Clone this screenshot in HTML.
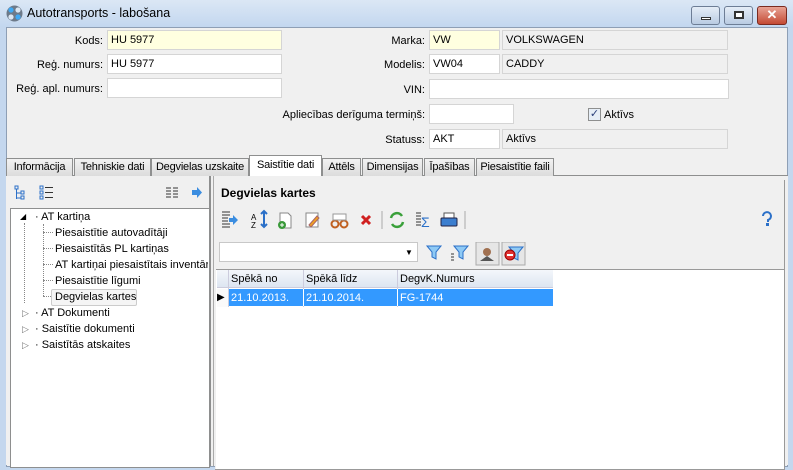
<!DOCTYPE html><html><head><meta charset="utf-8"><style>
*{box-sizing:border-box;margin:0;padding:0}
body{width:793px;height:464px;overflow:hidden;background:#c4d7ee;font-family:"Liberation Sans",Tahoma,sans-serif;font-size:11px;color:#000;position:relative;white-space:nowrap}
.a{position:absolute}
.title{left:0;top:0;width:793px;height:27px;background:linear-gradient(#dbe7f5,#c3d7ef)}
.win{left:6px;top:27px;width:782px;height:440px;background:#f0f0f0;border:1px solid #8e9fb5}
.lbl{position:absolute;text-align:right;font-size:11px}
.in{position:absolute;height:20px;background:#fff;border:1px solid #d5d5d5;padding:2px 3px;font-size:11px;line-height:14px}
.y{background:#ffffe0}
.g{background:#f0f0f0}
.tab{position:absolute;top:158px;height:18px;border:1px solid #8e8f8f;border-bottom:none;background:linear-gradient(#f2f2f2,#dcdcdc);padding:2px 0;font-size:11px;text-align:center;letter-spacing:-0.2px;overflow:hidden}
.btn{position:absolute;top:6px;height:19px;border:1px solid #6d7d95;border-radius:3px}
</style></head><body>
<div class="a title"></div>
<svg class="a" style="left:6px;top:5px" width="17" height="17"><circle cx="8.5" cy="8.5" r="8" fill="#6d7a8a"/><circle cx="5" cy="5" r="2.6" fill="#3fa9f5"/><circle cx="12" cy="5" r="2.6" fill="#dbe6f2"/><circle cx="5" cy="12" r="2.6" fill="#dbe6f2"/><circle cx="12" cy="12" r="2.6" fill="#3fa9f5"/></svg>
<div class="a" style="left:27px;top:6px;font-size:12.5px">Autotransports - labošana</div>
<div class="btn" style="left:691px;width:29px;background:linear-gradient(#e5edf7,#b9cbe2)"><div class="a" style="left:9px;top:10px;width:10px;height:3px;background:#fff;border:1px solid #333"></div></div>
<div class="btn" style="left:724px;width:29px;background:linear-gradient(#e5edf7,#b9cbe2)"><div class="a" style="left:9px;top:4px;width:10px;height:8px;border:2px solid #333;background:#fff"></div></div>
<div class="btn" style="left:757px;width:30px;background:linear-gradient(#e8a395,#c44a34);border-color:#7a2a20;color:#fff;font-weight:bold;text-align:center;font-size:13px;line-height:16px">✕</div>
<div class="a win"></div>

<div class="lbl" style="left:20px;top:35px;width:83px">Kods:</div>
<div class="in y" style="left:107px;top:30px;width:175px">HU 5977</div>
<div class="lbl" style="left:20px;top:59px;width:83px">Reģ. numurs:</div>
<div class="in" style="left:107px;top:54px;width:175px">HU 5977</div>
<div class="lbl" style="left:10px;top:83px;width:93px">Reģ. apl. numurs:</div>
<div class="in" style="left:107px;top:78px;width:175px"></div>

<div class="lbl" style="left:340px;top:35px;width:85px">Marka:</div>
<div class="in y" style="left:429px;top:30px;width:71px">VW</div>
<div class="in g" style="left:502px;top:30px;width:226px">VOLKSWAGEN</div>
<div class="lbl" style="left:340px;top:59px;width:85px">Modelis:</div>
<div class="in" style="left:429px;top:54px;width:71px">VW04</div>
<div class="in g" style="left:502px;top:54px;width:226px">CADDY</div>
<div class="lbl" style="left:340px;top:84px;width:85px">VIN:</div>
<div class="in" style="left:429px;top:79px;width:300px"></div>
<div class="lbl" style="left:250px;top:109px;width:175px">Apliecības derīguma termiņš:</div>
<div class="in" style="left:429px;top:104px;width:85px"></div>
<div class="a" style="left:588px;top:108px;width:13px;height:13px;border:1px solid #8e8f8f;background:#e6eef7;color:#2a3f7a;font-size:11px;line-height:11px;text-align:center">✓</div>
<div class="a" style="left:604px;top:109px">Aktīvs</div>
<div class="lbl" style="left:340px;top:134px;width:85px">Statuss:</div>
<div class="in" style="left:429px;top:129px;width:71px">AKT</div>
<div class="in g" style="left:502px;top:129px;width:226px">Aktīvs</div>

<div class="a" style="left:6px;top:175px;width:782px;height:290px;background:#f0f0f0;border-top:1px solid #8e8f8f"></div>
<div class="tab" style="left:6px;width:67px">Informācija</div>
<div class="tab" style="left:74px;width:77px">Tehniskie dati</div>
<div class="tab" style="left:151px;width:98px">Degvielas uzskaite</div>
<div class="tab" style="left:249px;width:73px;top:155px;height:21px;background:#fff;padding-top:3px">Saistītie dati</div>
<div class="tab" style="left:322px;width:39px">Attēls</div>
<div class="tab" style="left:362px;width:61px">Dimensijas</div>
<div class="tab" style="left:424px;width:51px">Īpašības</div>
<div class="tab" style="left:476px;width:78px">Piesaistītie faili</div>

<!-- left panel -->
<svg class="a" style="left:13px;top:184px" width="190" height="18"><g stroke="#2b70c8" fill="none"><rect x="2" y="2" width="3" height="3"/><path d="M3.5 5v10M3.5 9h4M3.5 14h4"/><rect x="8" y="7" width="3" height="3"/><rect x="8" y="12" width="3" height="3"/><rect x="27" y="2" width="3" height="3"/><rect x="27" y="7" width="3" height="3"/><rect x="27" y="12" width="3" height="3"/></g><g stroke="#333"><path d="M32 3.5h8M32 8.5h8M32 13.5h8M153 4h5M153 7h5M153 10h5M153 13h5M160 4h5M160 7h5M160 10h5M160 13h5"/></g><path d="M179 6h5v-3l5 5.5-5 5.5v-3h-5z" fill="#3b8de0"/></svg>
<div class="a" style="left:10px;top:208px;width:200px;height:260px;background:#fff;border:1px solid #8e8f8f"></div>
<div class="a" style="left:24px;top:223px;height:80px;border-left:1px dotted #888"></div>
<div class="a" style="left:43px;top:224px;height:72px;border-left:1px dotted #888"></div>
<div class="a" style="left:20px;top:212px;font-size:8px">◢</div>
<div class="a" style="left:35px;top:211px">· AT kartiņa</div>
<div class="a" style="left:43px;top:232px;width:10px;border-top:1px dotted #888"></div><div class="a" style="left:55px;top:227px">Piesaistītie autovadītāji</div>
<div class="a" style="left:43px;top:248px;width:10px;border-top:1px dotted #888"></div><div class="a" style="left:55px;top:243px">Piesaistītās PL kartiņas</div>
<div class="a" style="left:43px;top:264px;width:10px;border-top:1px dotted #888"></div><div class="a" style="left:55px;top:259px;width:153px;overflow:hidden">AT kartiņai piesaistītais inventārs</div>
<div class="a" style="left:43px;top:280px;width:10px;border-top:1px dotted #888"></div><div class="a" style="left:55px;top:275px">Piesaistītie līgumi</div>
<div class="a" style="left:43px;top:296px;width:10px;border-top:1px dotted #888"></div>
<div class="a" style="left:51px;top:289px;width:86px;height:17px;border:1px solid #ccc;border-radius:2px;background:#f5f5f5;padding:1px 3px">Degvielas kartes</div>
<div class="a" style="left:22px;top:308px;font-size:9px;color:#777">▷</div><div class="a" style="left:35px;top:307px">· AT Dokumenti</div>
<div class="a" style="left:22px;top:324px;font-size:9px;color:#777">▷</div><div class="a" style="left:35px;top:323px">· Saistītie dokumenti</div>
<div class="a" style="left:22px;top:340px;font-size:9px;color:#777">▷</div><div class="a" style="left:35px;top:339px">· Saistītās atskaites</div>

<!-- splitter -->
<div class="a" style="left:209px;top:176px;width:2px;height:290px;background:#8e8f8f"></div>
<div class="a" style="left:213px;top:176px;width:1px;height:290px;background:#aaa"></div>

<!-- right panel -->
<div class="a" style="left:215px;top:180px;width:570px;height:290px;border:1px solid #999;border-top:none;border-left:none;background:#f0f0f0"></div>
<div class="a" style="left:221px;top:186px;font-weight:bold;font-size:12px">Degvielas kartes</div>
<svg class="a" style="left:220px;top:209px" width="250" height="22"><g stroke="#333"><path d="M2 3h8M2 6h8M2 9h6M2 12h6M2 15h8M2 18h8"/></g><path d="M9 9h4v-3l5 5-5 5v-3h-4z" fill="#3b8de0"/><text x="31" y="11" font-size="8" font-family="Liberation Sans">A</text><text x="31" y="19" font-size="8" font-family="Liberation Sans">Z</text><path d="M41 5l3-3 3 3M44 3v14M41 15l3 3 3-3" stroke="#2b70c8" stroke-width="2" fill="none"/><path d="M60 4h8l3 3v12h-11z" fill="#fff" stroke="#888"/><circle cx="62" cy="16" r="4" fill="#3a9a3a"/><path d="M60 16h4M62 14v4" stroke="#fff"/><rect x="86" y="4" width="12" height="14" fill="#fff" stroke="#888"/><path d="M89 16l8-9 2 2-8 9z" fill="#f0a020" stroke="#a66"/><circle cx="115" cy="15" r="3.5" fill="none" stroke="#c06020" stroke-width="2"/><circle cx="124" cy="15" r="3.5" fill="none" stroke="#c06020" stroke-width="2"/><path d="M113 5h13v6h-13z" fill="#fff" stroke="#999"/><path d="M142 7l8 8M150 7l-8 8" stroke="#d02020" stroke-width="3"/><path d="M162 2v18" stroke="#aaa"/><path d="M171 9a6 6 0 0 1 11-2M183 13a6 6 0 0 1-11 2" stroke="#3aa03a" stroke-width="2.5" fill="none"/><g stroke="#333"><path d="M196 4h5M196 7h5M196 10h5M196 13h5M196 16h5"/></g><text x="201" y="18" font-size="14" fill="#2b70c8" font-family="Liberation Sans">Σ</text><rect x="224" y="4" width="10" height="6" fill="#fff" stroke="#555"/><rect x="221" y="9" width="16" height="8" rx="1" fill="#3b7ecf" stroke="#224"/><path d="M245 2v18" stroke="#aaa"/></svg>
<svg class="a" style="left:760px;top:211px" width="14" height="16"><path d="M3 5a4 4 0 1 1 5 4v2" stroke="#2b70c8" stroke-width="2" fill="none"/><rect x="6" y="12" width="3" height="3" fill="#2b70c8"/></svg>
<div class="a" style="left:219px;top:242px;width:199px;height:20px;background:#fff;border:1px solid #c8c8c8"></div>
<div class="a" style="left:405px;top:248px;font-size:8px">▼</div>
<svg class="a" style="left:425px;top:242px" width="120" height="24"><path d="M2 4h14l-5 6v7l-4-2v-5z" fill="#8fcaf5" stroke="#2b70c8"/><path d="M29 4h14l-5 6v7l-4-2v-5z" fill="#8fcaf5" stroke="#2b70c8"/><path d="M26 12h3M26 15h3M26 18h3" stroke="#333"/><rect x="51" y="0" width="23" height="23" fill="#e6e6e6" stroke="#aaa"/><circle cx="62" cy="10" r="4" fill="#a07050"/><path d="M55 19l7-5 7 5z" fill="#555"/><rect x="77" y="0" width="23" height="23" fill="#e6e6e6" stroke="#aaa"/><path d="M84 5h14l-5 6v7l-4-2v-5z" fill="#8fcaf5" stroke="#2b70c8"/><circle cx="85" cy="13" r="5" fill="#e03030" stroke="#900"/><path d="M82 13h6" stroke="#fff" stroke-width="2"/></svg>

<div class="a" style="left:216px;top:269px;width:568px;height:200px;background:#fff;border-top:1px solid #999"></div>
<div class="a" style="left:217px;top:270px;width:336px;height:18px;background:linear-gradient(#f4f7fb,#dde6f1);border-bottom:1px solid #ccd"></div>
<div class="a" style="left:228px;top:270px;height:37px;border-left:1px solid #ccd"></div>
<div class="a" style="left:303px;top:270px;height:37px;border-left:1px solid #ccd"></div>
<div class="a" style="left:397px;top:270px;height:37px;border-left:1px solid #ccd"></div>
<div class="a" style="left:231px;top:273px">Spēkā no</div>
<div class="a" style="left:306px;top:273px">Spēkā līdz</div>
<div class="a" style="left:400px;top:273px">DegvK.Numurs</div>
<div class="a" style="left:217px;top:289px;width:11px;height:18px;background:#fafafa;font-size:10px;line-height:18px">▶</div>
<div class="a" style="left:229px;top:289px;width:324px;height:17px;background:#3399ff;color:#fff"></div>
<div class="a" style="left:303px;top:289px;height:17px;border-left:1px solid #fff"></div>
<div class="a" style="left:397px;top:289px;height:17px;border-left:1px solid #fff"></div>
<div class="a" style="left:231px;top:292px;color:#fff">21.10.2013.</div>
<div class="a" style="left:306px;top:292px;color:#fff">21.10.2014.</div>
<div class="a" style="left:400px;top:292px;color:#fff">FG-1744</div>
</body></html>
